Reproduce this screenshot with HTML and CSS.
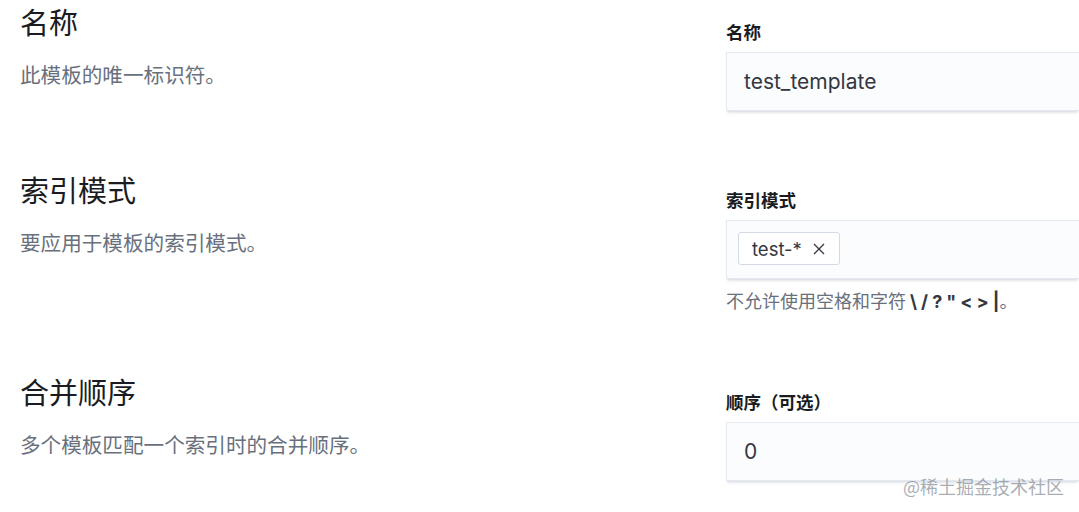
FILE: index.html
```html
<!DOCTYPE html>
<html lang="zh">
<head>
<meta charset="utf-8">
<title>模板</title>
<link rel="stylesheet" href="styles.css">
</head>
<body>
<div class="page">
  <section class="row">
    <div class="left">
      <h2 class="title">名称</h2>
      <p class="desc">此模板的唯一标识符。</p>
    </div>
    <div class="right">
      <label class="label">名称</label>
      <div class="field"><span class="value">test_template</span></div>
    </div>
  </section>

  <section class="row">
    <div class="left">
      <h2 class="title">索引模式</h2>
      <p class="desc">要应用于模板的索引模式。</p>
    </div>
    <div class="right">
      <label class="label">索引模式</label>
      <div class="field field-combo">
        <span class="chip">test-*
          <svg class="chip-x" viewBox="0 0 12 12" width="12" height="12"><path d="M1 1 L11 11 M11 1 L1 11" stroke="#343741" stroke-width="1.3" fill="none"/></svg>
        </span>
      </div>
      <p class="help">不允许使用空格和字符 <b>\</b> <b>/</b> <b>?</b> <b>"</b> <b>&lt;</b> <b>&gt;</b> <b>|</b>。</p>
    </div>
  </section>

  <section class="row">
    <div class="left">
      <h2 class="title">合并顺序</h2>
      <p class="desc">多个模板匹配一个索引时的合并顺序。</p>
    </div>
    <div class="right">
      <label class="label">顺序（可选）</label>
      <div class="field"><span class="value">0</span></div>
    </div>
  </section>
</div>
<div class="watermark">@稀土掘金技术社区</div>
</body>
</html>
```

FILE: styles.css
```css
html, body {
  margin: 0;
  padding: 0;
  background: #fff;
  overflow: hidden;
  width: 1079px;
  height: 512px;
}
body {
  font-family: "Inter", "Noto Sans CJK SC", sans-serif;
  color: #1a1c21;
  position: relative;
}
.page {
  display: flex;
  flex-direction: column;
  gap: 57px;
}
.row {
  display: flex;
  align-items: flex-start;
}
.left {
  flex: none;
  width: 726px;
  padding-left: 20px;
  padding-top: 3px;
  box-sizing: border-box;
}
.title {
  margin: 0;
  font-family: "Noto Sans CJK SC", sans-serif;
  font-weight: 400;
  font-size: 29px;
  line-height: 36px;
  color: #1a1c21;
}
.desc {
  margin: 23px 0 0;
  font-family: "Noto Sans CJK SC", sans-serif;
  font-size: 20.6px;
  line-height: 24px;
  color: #69707d;
}
.right {
  flex: none;
  width: 353px;
  padding-top: 23px;
  display: flex;
  flex-direction: column;
}
.label {
  display: block;
  font-family: "Inter", "Noto Sans CJK SC", sans-serif;
  font-weight: 700;
  font-size: 17.5px;
  line-height: 20px;
  color: #1a1c21;
}
.field {
  margin-top: 9px;
  height: 59px;
  box-sizing: border-box;
  background: #fbfcfd;
  border: 1px solid #e4e8ef;
  border-right: none;
  box-shadow: 0 2px 2px -1px rgba(152,162,179,0.25), 0 4px 3px -2px rgba(152,162,179,0.2);
  display: flex;
  align-items: center;
  padding-left: 17px;
}
.value {
  font-size: 21px;
  color: #343741;
}
.field-combo {
  align-items: flex-start;
  padding-left: 11px;
  padding-top: 11px;
}
.chip {
  display: inline-flex;
  align-items: center;
  gap: 11px;
  height: 33px;
  box-sizing: border-box;
  padding: 0 14px 0 13px;
  background: #fff;
  border: 1px solid #d3dae6;
  border-radius: 3px;
  font-size: 18.5px;
  color: #343741;
}
.chip-x {
  display: block;
}
.help {
  margin: 10px 0 0;
  font-family: "Noto Sans CJK SC", sans-serif;
  font-size: 18px;
  line-height: 22px;
  color: #69707d;
}
.help b {
  font-family: "Inter", sans-serif;
  color: #343741;
  font-weight: 700;
}
.watermark {
  position: absolute;
  left: 903px;
  top: 474px;
  font-family: "Noto Sans CJK SC", sans-serif;
  font-size: 18px;
  line-height: 24px;
  color: rgba(140,146,155,0.75);
}
```
